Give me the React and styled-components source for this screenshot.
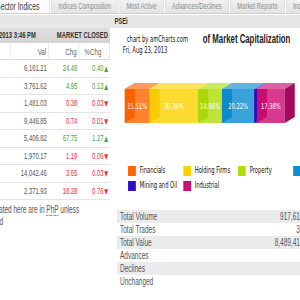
import React from "react";
import styled, { createGlobalStyle } from "styled-components";

// the captured page is squeezed horizontally, so it is laid out wide and scaled on x
const SQUEEZE = 0.65;

const GlobalStyle = createGlobalStyle`
  html, body {
    margin: 0;
    padding: 0;
    background: #fff;
    overflow: hidden;
  }
  body {
    font-family: "Liberation Sans", Arial, sans-serif;
    color: #555;
  }
`;

const Viewport = styled.div`
  width: 300px;
  height: 300px;
  overflow: hidden;
`;

const Screen = styled.div`
  width: ${300 / SQUEEZE}px;
  height: 300px;
  overflow: hidden;
  transform: scaleX(${SQUEEZE});
  transform-origin: 0 0;
`;

const Page = styled.div`
  width: 575px;
  margin-left: -85px;
`;

const TabBar = styled.div`
  display: flex;
  height: 13px;
  padding-left: 63px;
  border-bottom: 1px solid #cfcfcf;
  white-space: nowrap;
`;

const Tab = styled.div`
  flex: none;
  height: 13px;
  line-height: 13px;
  padding: 0 ${(p) => (p.$active ? 15 : 10)}px;
  margin-right: 2px;
  font-size: ${(p) => (p.$active ? 10.5 : 9)}px;
  color: ${(p) => (p.$active ? "#3a3a3a" : "#8c8c8c")};
  background: ${(p) => (p.$active ? "#fbfbfb" : "linear-gradient(#f1f1f1, #e3e3e3)")};
  border-left: 1px solid #d4d4d4;
  border-right: 1px solid #d4d4d4;
`;

const TitleBar = styled.div`
  margin-top: 1px;
  height: 13px;
  line-height: 13px;
  padding-left: 261px;
  background: #e7e7e7;
  font-size: 9px;
  font-weight: bold;
  color: #333;
`;

const Body = styled.div`
  display: flex;
  align-items: flex-start;
  gap: 3px;
`;

const LeftCol = styled.div`
  width: 254px;
  flex: none;
`;

const MarketBar = styled.div`
  display: flex;
  justify-content: space-between;
  height: 15px;
  line-height: 15px;
  padding: 0 3px 0 4px;
  background: linear-gradient(#dedede, #d4d4d4);
  font-size: 9px;
  font-weight: bold;
  color: #333;
  white-space: nowrap;
`;

const Grid = styled.div`
  display: grid;
  grid-template-columns: 102px 58px 47px 47px;
`;

const HeadCell = styled.div`
  box-sizing: border-box;
  height: 17px;
  line-height: 17px;
  padding-right: ${(p) => p.$pad}px;
  text-align: right;
  font-size: 9.5px;
  color: #666;
  border-right: 1px solid #e0e0e0;
  border-bottom: 1px solid #dadada;
`;

const Cell = styled.div`
  box-sizing: border-box;
  height: 17.5px;
  line-height: 17px;
  padding: 0 ${(p) => (p.$name ? 0 : 3)}px 0 ${(p) => (p.$name ? 4 : 0)}px;
  text-align: ${(p) => (p.$name ? "left" : "right")};
  font-size: 9px;
  color: ${(p) => p.$tone || "#555"};
  border-bottom: 1px solid #e3e3e3;
  white-space: nowrap;
`;

const Arrow = styled.span`
  font-family: "DejaVu Sans", sans-serif;
  font-size: 7.5px;
  margin-left: 1px;
`;

const Note = styled.p`
  margin: 4px 0 0;
  padding: 0 20px 0 4px;
  font-size: 10px;
  line-height: 12px;
  color: #555;
`;

const Abbr = styled.abbr`
  text-decoration: none;
  border-bottom: 1px dotted #555;
`;

const RightCol = styled.div`
  width: 318px;
  flex: none;
`;

const ChartHead = styled.div`
  display: flex;
  box-sizing: border-box;
  height: 50px;
  padding-top: 6px;
`;

const Credit = styled.div`
  width: 140px;
  flex: none;
  box-sizing: border-box;
  padding-left: 17px;
  font-family: "DejaVu Sans", sans-serif;
  font-size: 8px;
  line-height: 11px;
  color: #111;
`;

const CreditLink = styled.div`
  margin-left: 6px;
`;

const ChartTitle = styled.div`
  font-size: 12px;
  line-height: 11px;
  font-weight: bold;
  color: #1d1d1d;
  white-space: nowrap;
`;

const BarSvg = styled.svg`
  display: block;
  font-family: "DejaVu Sans", sans-serif;
`;

const Legend = styled.div`
  display: grid;
  grid-template-columns: repeat(4, 84.6px);
  margin: 35px 0 0 25px;
`;

const LegendItem = styled.div`
  display: flex;
  align-items: center;
  gap: 6px;
  height: 15px;
  font-family: "DejaVu Sans", sans-serif;
  font-size: 8px;
  color: #111;
  white-space: nowrap;
`;

const Swatch = styled.span`
  width: 12px;
  height: 10px;
  flex: none;
  background: ${(p) => p.$color};
`;

const Stats = styled.div`
  width: 310px;
  margin: 17px 0 0 8px;
`;

const StatRow = styled.div`
  display: flex;
  justify-content: space-between;
  height: 13px;
  line-height: 13px;
  padding: 0 3.5px 0 4.6px;
  font-size: 10px;
  color: #555;
  background: ${(p) => (p.$shade ? "#ebebeb" : "#fff")};
`;

const TABS = ["Sector Indices", "Indices Composition", "Most Active", "Advances/Declines", "Market Reports", "Index History"];

const INDICES = [
  { name: "PSEi", val: "6,161.21", chg: "24.48", pct: "0.40", up: true },
  { name: "All Shares", val: "3,761.62", chg: "4.95", pct: "0.13", up: true },
  { name: "Financials", val: "1,481.03", chg: "0.38", pct: "0.03", up: false },
  { name: "Industrial", val: "9,446.85", chg: "0.74", pct: "0.01", up: false },
  { name: "Holding Firms", val: "5,406.82", chg: "67.75", pct: "1.27", up: true },
  { name: "Services", val: "1,970.17", chg: "1.19", pct: "0.06", up: false },
  { name: "Mining and Oil", val: "14,042.46", chg: "3.65", pct: "0.03", up: false },
  { name: "Property", val: "2,371.93", chg: "18.28", pct: "0.76", up: false },
];

const SECTORS = [
  { name: "Financials", pct: 15.51, color: "#FF6600" },
  { name: "Holding Firms", pct: 30.36, color: "#FCD202" },
  { name: "Property", pct: 14.86, color: "#B0DE09" },
  { name: "Services", pct: 20.22, color: "#0D8ECF" },
  { name: "Mining and Oil", pct: 1.67, color: "#2A0CD0" },
  { name: "Industrial", pct: 17.38, color: "#CD0D74" },
];

const STATS = [
  ["Total Volume", "917,614,352"],
  ["Total Trades", "35,871"],
  ["Total Value", "8,489,412,345"],
  ["Advances", "116"],
  ["Declines", "82"],
  ["Unchanged", "43"],
];

const UP = "#3fa43f";
const DOWN = "#e8323a";

const StackedBar = () => {
  const X0 = 20, W = 246, TOP = 11, BOT = 45, DX = 15.4, DY = 6;
  let x = X0;
  const parts = SECTORS.map((s) => {
    const w = (W * s.pct) / 100;
    const part = { ...s, x, w };
    x += w;
    return part;
  });
  const side = (sx) => `${sx},${TOP} ${sx + DX},${TOP - DY} ${sx + DX},${BOT - DY} ${sx},${BOT}`;
  const last = parts[parts.length - 1];

  return (
    <BarSvg width="318" height="50" viewBox="0 0 318 50">
      {parts.map((p) => (
        <g key={"side" + p.name}>
          <polygon points={side(p.x)} fill={p.color} />
          <polygon points={side(p.x)} fill="#000" opacity="0.15" />
        </g>
      ))}
      {parts.map((p) => {
        const pts = `${p.x},${TOP} ${p.x + DX},${TOP - DY} ${p.x + p.w + DX},${TOP - DY} ${p.x + p.w},${TOP}`;
        return (
          <g key={"top" + p.name}>
            <polygon points={pts} fill="#fff" />
            <polygon points={pts} fill={p.color} opacity="0.65" />
          </g>
        );
      })}
      {parts.map((p) => (
        <rect key={"front" + p.name} x={p.x} y={TOP} width={p.w} height={BOT - TOP} fill={p.color} fillOpacity="0.82" />
      ))}
      <polygon points={side(last.x + last.w)} fill={last.color} />
      <polygon points={side(last.x + last.w)} fill="#000" opacity="0.2" />
      {parts
        .filter((p) => p.pct > 5)
        .map((p) => (
          <text key={"lbl" + p.name} x={p.x + p.w / 2} y={(TOP + BOT) / 2 + 3} fontSize="8" fill="#fff" textAnchor="middle">
            {p.pct.toFixed(2)}%
          </text>
        ))}
    </BarSvg>
  );
};

const App = () => {
  return (
    <Viewport>
      <GlobalStyle />
      <Screen>
        <Page>
          <TabBar>
            {TABS.map((t, i) => (
              <Tab key={t} $active={i === 0}>
                {t}
              </Tab>
            ))}
          </TabBar>
          <TitleBar>PSEi</TitleBar>

          <Body>
            <LeftCol>
              <MarketBar>
                <span>Friday, August 23, 2013 3:46 PM</span>
                <span>MARKET CLOSED</span>
              </MarketBar>
              <Grid>
                <HeadCell $pad={0} />
                <HeadCell $pad={3}>Val</HeadCell>
                <HeadCell $pad={3}>Chg</HeadCell>
                <HeadCell $pad={12}>%Chg</HeadCell>
                {INDICES.map((row) => {
                  const tone = row.up ? UP : DOWN;
                  return (
                    <React.Fragment key={row.name}>
                      <Cell $name $tone="#2b5d9c">{row.name}</Cell>
                      <Cell>{row.val}</Cell>
                      <Cell $tone={tone}>{row.chg}</Cell>
                      <Cell $tone={tone}>
                        {row.pct}
                        <Arrow>{row.up ? "▲" : "▼"}</Arrow>
                      </Cell>
                    </React.Fragment>
                  );
                })}
              </Grid>
              <Note>
                Note: All values stated here are in <Abbr title="Philippine Peso">PhP</Abbr> unless otherwise indicated
              </Note>
            </LeftCol>

            <RightCol>
              <ChartHead>
                <Credit>
                  <CreditLink>chart by amCharts.com</CreditLink>
                  <div>Fri, Aug 23, 2013</div>
                </Credit>
                <ChartTitle>of Market Capitalization</ChartTitle>
              </ChartHead>
              <StackedBar />
              <Legend>
                {SECTORS.map((s) => (
                  <LegendItem key={s.name}>
                    <Swatch $color={s.color} />
                    {s.name}
                  </LegendItem>
                ))}
              </Legend>
              <Stats>
                {STATS.map(([label, value], i) => (
                  <StatRow key={label} $shade={i % 2 === 0}>
                    <span>{label}</span>
                    <span>{value}</span>
                  </StatRow>
                ))}
              </Stats>
            </RightCol>
          </Body>
        </Page>
      </Screen>
    </Viewport>
  );
};

export default App;
